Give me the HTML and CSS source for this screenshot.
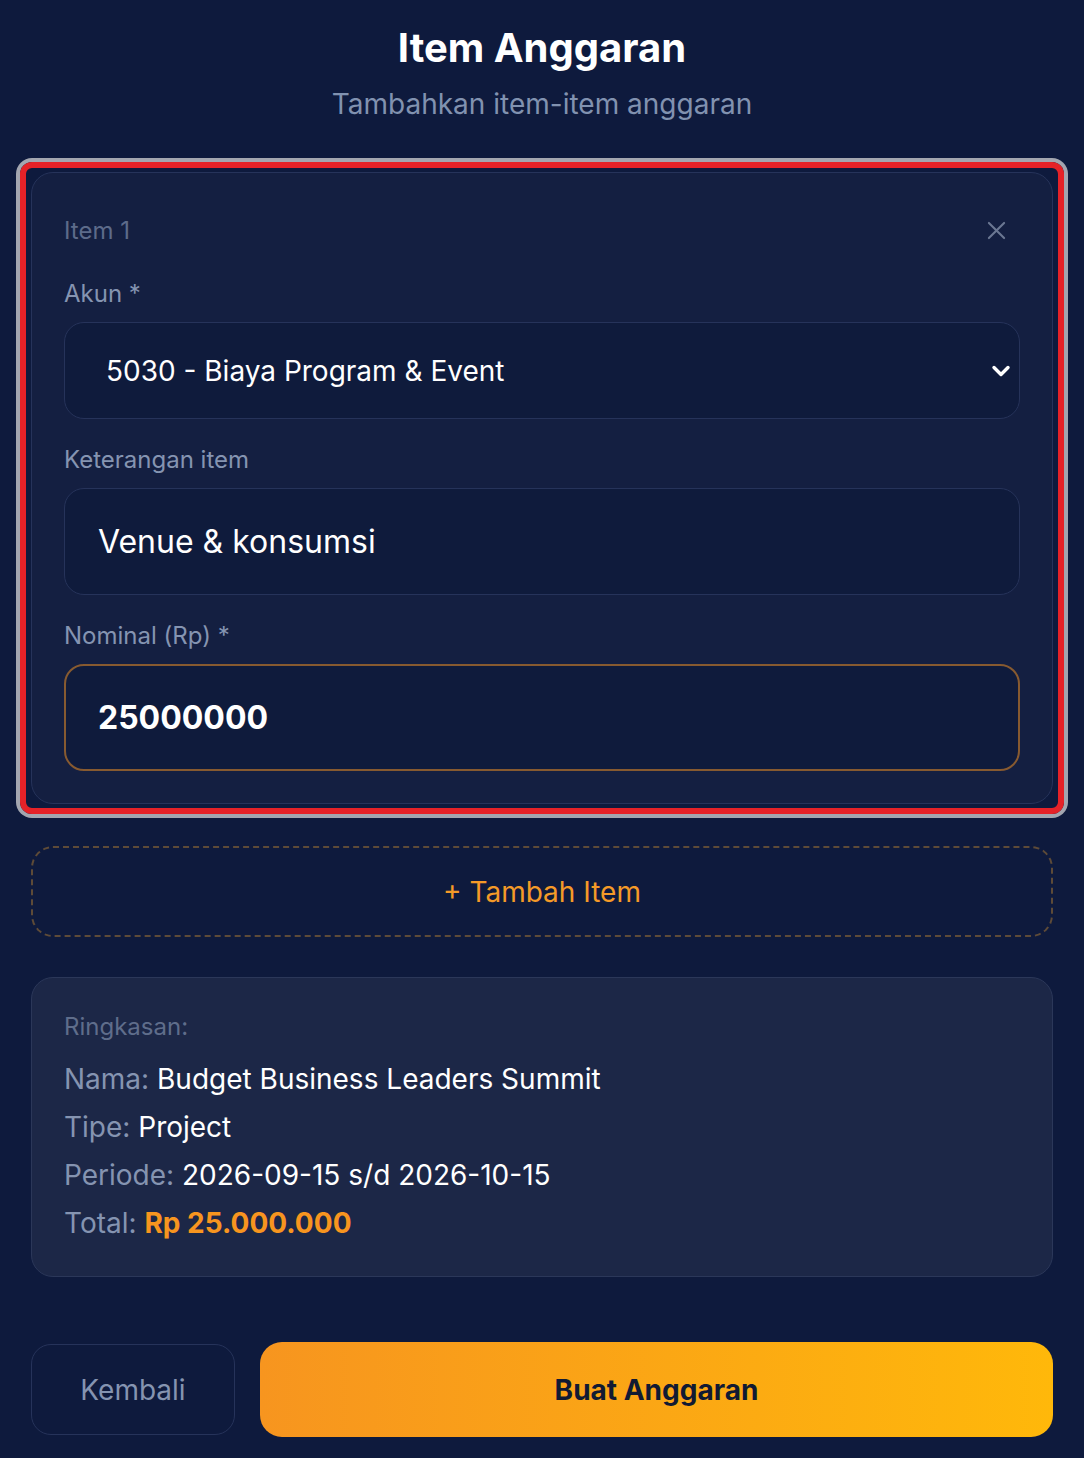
FILE: index.html
```html
<!DOCTYPE html>
<html lang="id">
<head>
<meta charset="utf-8">
<title>Item Anggaran</title>
<link rel="stylesheet" href="styles.css">
</head>
<body>
<main class="page">
  <header class="page-head">
    <h1 class="title">Item Anggaran</h1>
    <p class="subtitle">Tambahkan item-item anggaran</p>
  </header>

  <div class="focus-ring">
    <section class="item-card">
      <div class="item-head">
        <span class="item-name">Item 1</span>
        <button class="remove-btn" type="button" aria-label="Hapus item">
          <svg width="20" height="20" viewBox="0 0 20 20" fill="none" stroke="currentColor" stroke-width="2.2" stroke-linecap="round"><path d="M2 2 L18 18 M18 2 L2 18"/></svg>
        </button>
      </div>

      <label class="field-label">Akun *</label>
      <div class="select-box">
        <span>5030 - Biaya Program &amp; Event</span>
        <svg class="chev" width="20" height="14" viewBox="0 0 20 14" fill="none" stroke="#ffffff" stroke-width="3.4" stroke-linecap="round" stroke-linejoin="round"><path d="M3 3.5 L10 10.5 L17 3.5"/></svg>
      </div>

      <label class="field-label gap">Keterangan item</label>
      <input class="text-input" type="text" value="Venue &amp; konsumsi">

      <label class="field-label gap">Nominal (Rp) *</label>
      <input class="text-input amount" type="text" value="25000000">
    </section>
  </div>

  <button class="add-btn" type="button">+ Tambah Item</button>

  <section class="summary">
    <p class="summary-title">Ringkasan:</p>
    <p class="summary-row"><span class="k">Nama:</span> Budget Business Leaders Summit</p>
    <p class="summary-row"><span class="k">Tipe:</span> Project</p>
    <p class="summary-row"><span class="k">Periode:</span> 2026-09-15 s/d 2026-10-15</p>
    <p class="summary-row"><span class="k">Total:</span> <strong class="total">Rp 25.000.000</strong></p>
  </section>

  <div class="actions">
    <button class="btn-back" type="button">Kembali</button>
    <button class="btn-primary" type="button">Buat Anggaran</button>
  </div>
</main>
</body>
</html>
```

FILE: styles.css
```css
* { box-sizing: border-box; }

html, body {
  margin: 0;
  padding: 0;
  background: #0e1a3d;
}

body {
  font-family: Inter, "Noto Sans", sans-serif;
  color: #ffffff;
}

.page {
  padding: 25px 31px 40px;
  display: flex;
  flex-direction: column;
}

.page-head {
  text-align: center;
}

.title {
  margin: 0;
  font-size: 40px;
  line-height: 46px;
  font-weight: 700;
  color: #ffffff;
}

.subtitle {
  margin: 14px 0 0;
  font-size: 28px;
  line-height: 38px;
  color: #8192b0;
}

.focus-ring {
  margin: 39px -11px 0;
  border: 6px solid #e52228;
  border-radius: 12px;
  box-shadow: 0 0 0 4px #a3a6b0;
  padding: 4px 5px;
}

.item-card {
  background: #141f41;
  border: 1px solid #26335a;
  border-radius: 22px;
  padding: 31px 32px 32px;
  display: flex;
  flex-direction: column;
}

.item-head {
  height: 52px;
  display: flex;
  align-items: center;
  justify-content: space-between;
  margin-bottom: 21px;
}

.item-name {
  font-size: 24px;
  color: #5d6b8a;
}

.remove-btn {
  background: none;
  border: none;
  padding: 0;
  margin-right: 14px;
  color: #6b7792;
  display: flex;
  cursor: pointer;
}

.remove-btn svg { width: 19px; height: 19px; }

.field-label {
  display: block;
  font-size: 24px;
  line-height: 33px;
  color: #8594b1;
  margin-bottom: 12px;
}

.field-label.gap {
  margin-top: 24px;
  margin-bottom: 12px;
}

.select-box {
  height: 97px;
  border: 1px solid #26335a;
  border-radius: 20px;
  background: #0f1b3c;
  display: flex;
  align-items: center;
  justify-content: space-between;
  padding: 0 8px 0 41px;
  font-size: 28px;
  color: #ffffff;
}

.chev { width: 20px; height: 14px; }

.text-input {
  display: block;
  width: 100%;
  height: 107px;
  border: 1px solid #26335a;
  border-radius: 20px;
  background: #0f1b3c;
  padding: 0 33px;
  font-family: Inter, "Noto Sans", sans-serif;
  font-size: 32px;
  color: #ffffff;
  outline: none;
}

.text-input.amount {
  border: 2px solid #875a30;
  padding: 0 32px;
  font-weight: 700;
}

.add-btn {
  margin-top: 32px;
  height: 91px;
  border: 2px dashed #5e4b38;
  border-radius: 22px;
  background: transparent;
  font-family: Inter, "Noto Sans", sans-serif;
  font-size: 28px;
  color: #f59a28;
  cursor: pointer;
}

.summary {
  margin-top: 40px;
  background: #1c2747;
  border: 1px solid #2b3759;
  border-radius: 22px;
  padding: 32px 32px 29px;
}

.summary-title {
  margin: 0 0 12px;
  font-size: 24px;
  line-height: 33px;
  color: #5f6d8b;
}

.summary-row {
  margin: 0;
  font-size: 28px;
  line-height: 48px;
  color: #ffffff;
}

.summary-row .k { color: #8594b1; }

.total {
  color: #f7951f;
  font-weight: 700;
}

.actions {
  margin-top: 65px;
  display: flex;
  align-items: center;
  gap: 25px;
}

.btn-back {
  width: 204px;
  height: 91px;
  border: 1px solid #26335a;
  border-radius: 20px;
  background: transparent;
  font-family: Inter, "Noto Sans", sans-serif;
  font-size: 28px;
  color: #8594b1;
  cursor: pointer;
}

.btn-primary {
  flex: 1;
  height: 95px;
  border: none;
  border-radius: 22px;
  background: linear-gradient(90deg, #f7951f 0%, #ffb80a 100%);
  font-family: Inter, "Noto Sans", sans-serif;
  font-size: 28px;
  font-weight: 700;
  color: #111a33;
  cursor: pointer;
}
```
